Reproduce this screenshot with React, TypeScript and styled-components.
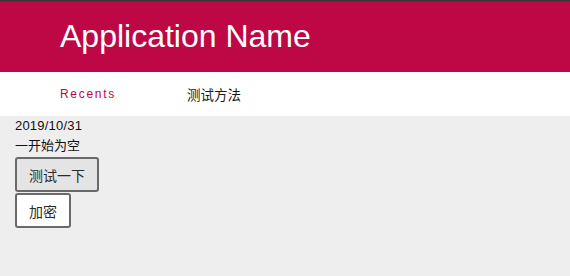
import React from 'react'
import styled, { createGlobalStyle } from 'styled-components'

const GlobalStyle = createGlobalStyle`
  html, body {
    margin: 0;
    padding: 0;
    height: 100%;
    background: #eeeeee;
    font-family: 'Liberation Sans', Arial, 'Noto Sans CJK SC', sans-serif;
  }
  #root {
    min-height: 100%;
  }
`

const Header = styled.header`
  height: 72px;
  box-sizing: border-box;
  display: flex;
  align-items: center;
  padding-left: 60px;
  background: linear-gradient(
    to bottom,
    #363636 0px,
    #363636 1px,
    #7a2040 1px,
    #7a2040 2px,
    #bd0845 2px
  );
`

const Title = styled.h1`
  margin: 0;
  color: #ffffff;
  font-size: 32px;
  font-weight: 400;
`

const Nav = styled.nav`
  height: 44px;
  display: flex;
  align-items: center;
  gap: 71px;
  padding-left: 60px;
  background: #ffffff;
`

const Tab = styled.a<{ active?: boolean }>`
  font-size: ${(p) => (p.active ? '12px' : '13.5px')};
  letter-spacing: ${(p) => (p.active ? '1.7px' : '0')};
  color: ${(p) => (p.active ? '#bd0845' : '#1a1a1a')};
  text-decoration: none;
  cursor: pointer;
`

const Content = styled.main`
  padding: 0 15px;
  font-size: 13px;
  line-height: 20px;
  color: #111111;
`

const Line = styled.div<{ wide?: boolean }>`
  letter-spacing: ${(p) => (p.wide ? '0.2px' : '0')};
`

const Button = styled.button<{ pressed?: boolean }>`
  display: block;
  margin-top: 1px;
  height: 35px;
  padding: 0 12px;
  font-family: 'Liberation Sans', Arial, 'Noto Sans CJK SC', sans-serif;
  font-size: 14px;
  color: #2a2a2a;
  background: ${(p) => (p.pressed ? '#e4e4e4' : '#ffffff')};
  border: 2px solid #6a6a6a;
  border-radius: 3px;
  cursor: pointer;
`

export default function App() {
  return (
    <>
      <GlobalStyle />
      <Header>
        <Title>Application Name</Title>
      </Header>
      <Nav>
        <Tab active>Recents</Tab>
        <Tab>测试方法</Tab>
      </Nav>
      <Content>
        <Line wide>2019/10/31</Line>
        <Line>一开始为空</Line>
        <Button pressed>测试一下</Button>
        <Button>加密</Button>
      </Content>
    </>
  )
}
